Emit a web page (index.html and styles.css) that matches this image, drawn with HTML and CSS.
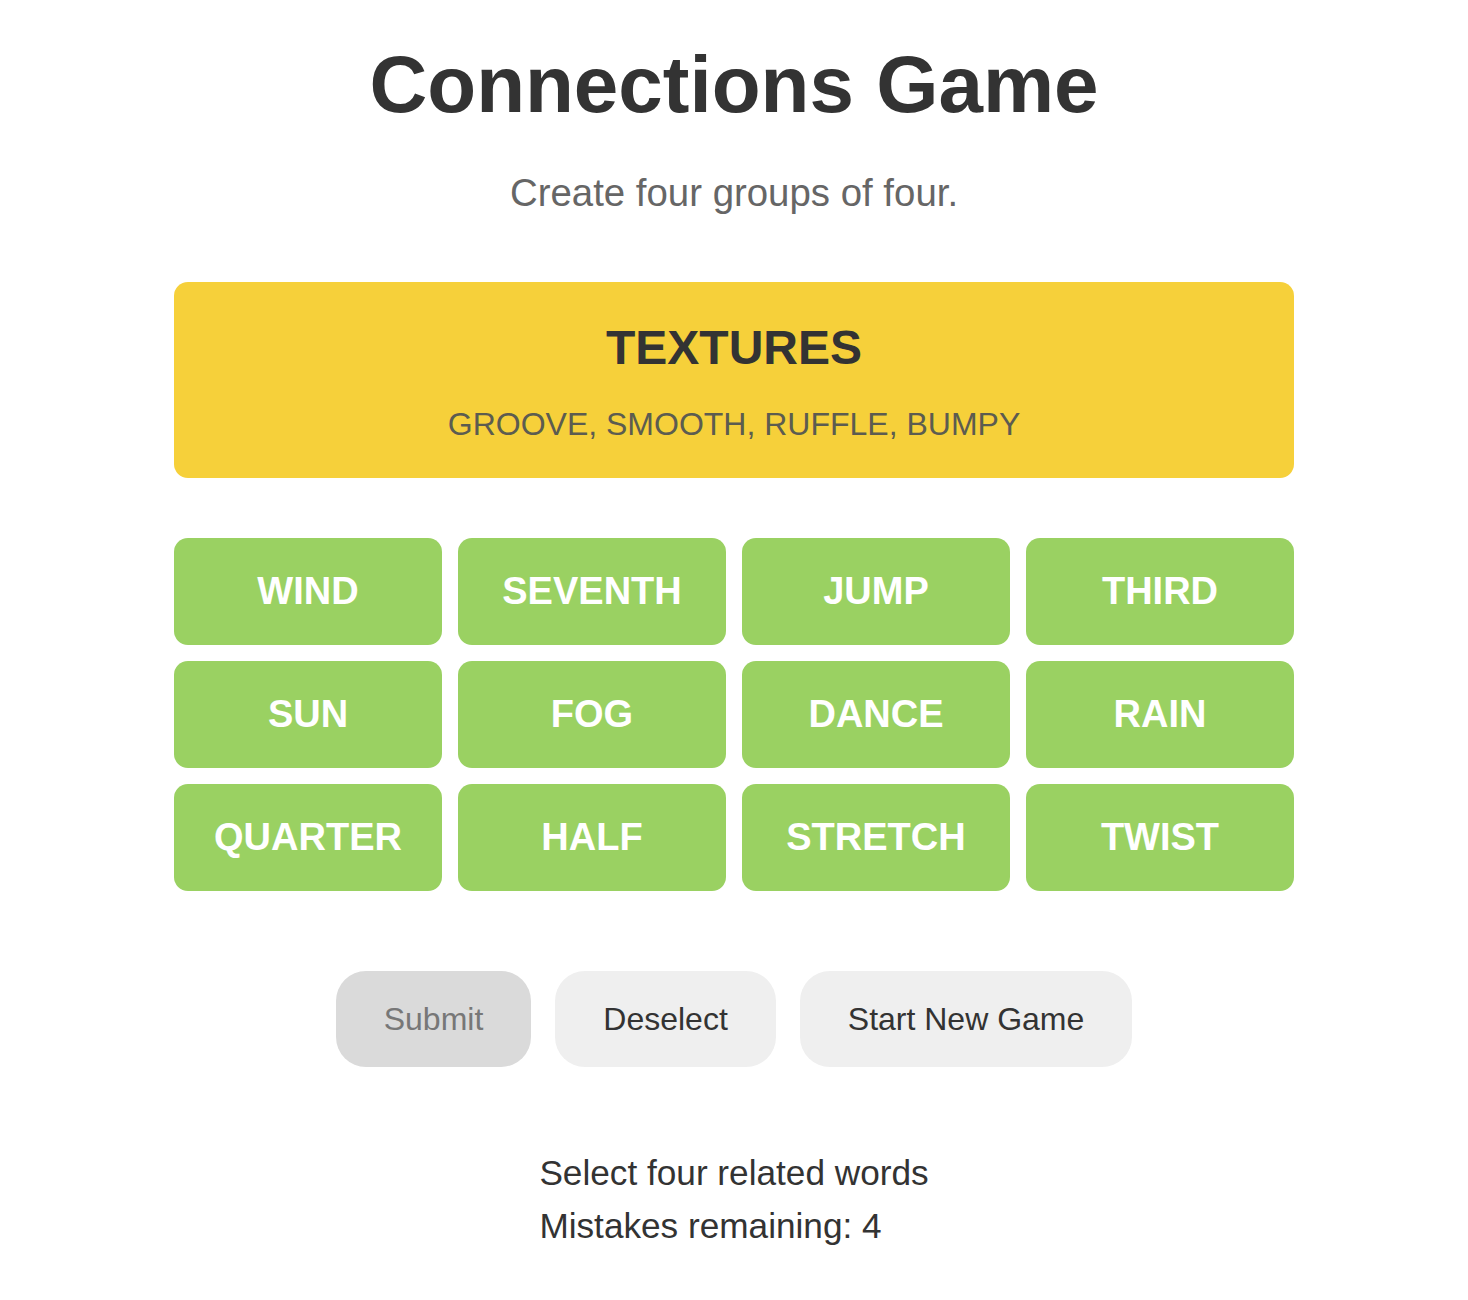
FILE: index.html
```html
<!DOCTYPE html>
<html lang="en">
<head>
<meta charset="utf-8">
<title>Connections Game</title>
<link rel="stylesheet" href="styles.css">
</head>
<body>
<main class="app">
  <h1 class="title">Connections Game</h1>
  <p class="subtitle">Create four groups of four.</p>

  <section class="solved">
    <h2 class="solved-title">TEXTURES</h2>
    <p class="solved-words">GROOVE, SMOOTH, RUFFLE, BUMPY</p>
  </section>

  <section class="grid">
    <button class="tile">WIND</button>
    <button class="tile">SEVENTH</button>
    <button class="tile">JUMP</button>
    <button class="tile">THIRD</button>
    <button class="tile">SUN</button>
    <button class="tile">FOG</button>
    <button class="tile">DANCE</button>
    <button class="tile">RAIN</button>
    <button class="tile">QUARTER</button>
    <button class="tile">HALF</button>
    <button class="tile">STRETCH</button>
    <button class="tile">TWIST</button>
  </section>

  <div class="controls">
    <button class="btn btn-disabled">Submit</button>
    <button class="btn">Deselect</button>
    <button class="btn">Start New Game</button>
  </div>

  <div class="status-wrap">
    <div class="status">
      <div class="status-line">Select four related words</div>
      <div class="status-line">Mistakes remaining: 4</div>
    </div>
  </div>
</main>
</body>
</html>
```

FILE: styles.css
```css
* {
  box-sizing: border-box;
}

body {
  margin: 0;
  background: #ffffff;
  font-family: "Liberation Sans", Arial, sans-serif;
  color: #333333;
}

.app {
  width: 1120px;
  margin: 0 auto;
  padding-top: 39px;
  text-align: center;
}

.title {
  margin: 0;
  font-size: 80px;
  line-height: 92px;
  font-weight: 700;
  color: #333333;
}

.subtitle {
  margin: 40px 0 0;
  font-size: 38.4px;
  line-height: 44px;
  color: #666666;
}

.solved {
  margin-top: 67px;
  height: 196px;
  padding-top: 38px;
  background: #f6d03a;
  border-radius: 14px;
}

.solved-title {
  margin: 0;
  font-size: 48px;
  line-height: 55px;
  font-weight: 700;
  color: #333333;
}

.solved-words {
  margin: 31px 0 0;
  font-size: 32px;
  line-height: 37px;
  color: #5c5c50;
}

.grid {
  margin-top: 60px;
  display: grid;
  grid-template-columns: repeat(4, 1fr);
  grid-auto-rows: 107px;
  gap: 16px;
}

.tile {
  border: none;
  margin: 0;
  padding: 0;
  background: #9ad162;
  border-radius: 14px;
  color: #ffffff;
  font-family: "Liberation Sans", Arial, sans-serif;
  font-size: 38px;
  font-weight: 700;
  display: flex;
  align-items: center;
  justify-content: center;
}

.controls {
  margin-top: 80px;
  display: flex;
  justify-content: center;
  gap: 24px;
}

.btn {
  height: 96px;
  padding: 0 48px;
  margin: 0;
  border: none;
  border-radius: 30px;
  background: #efefef;
  color: #333333;
  font-family: "Liberation Sans", Arial, sans-serif;
  font-size: 32px;
}

.btn-disabled {
  background: #dadada;
  color: #777777;
}

.status-wrap {
  margin-top: 80px;
  text-align: center;
}

.status {
  display: inline-block;
  text-align: left;
  font-size: 35.2px;
  line-height: 52.8px;
  color: #333333;
}
```
